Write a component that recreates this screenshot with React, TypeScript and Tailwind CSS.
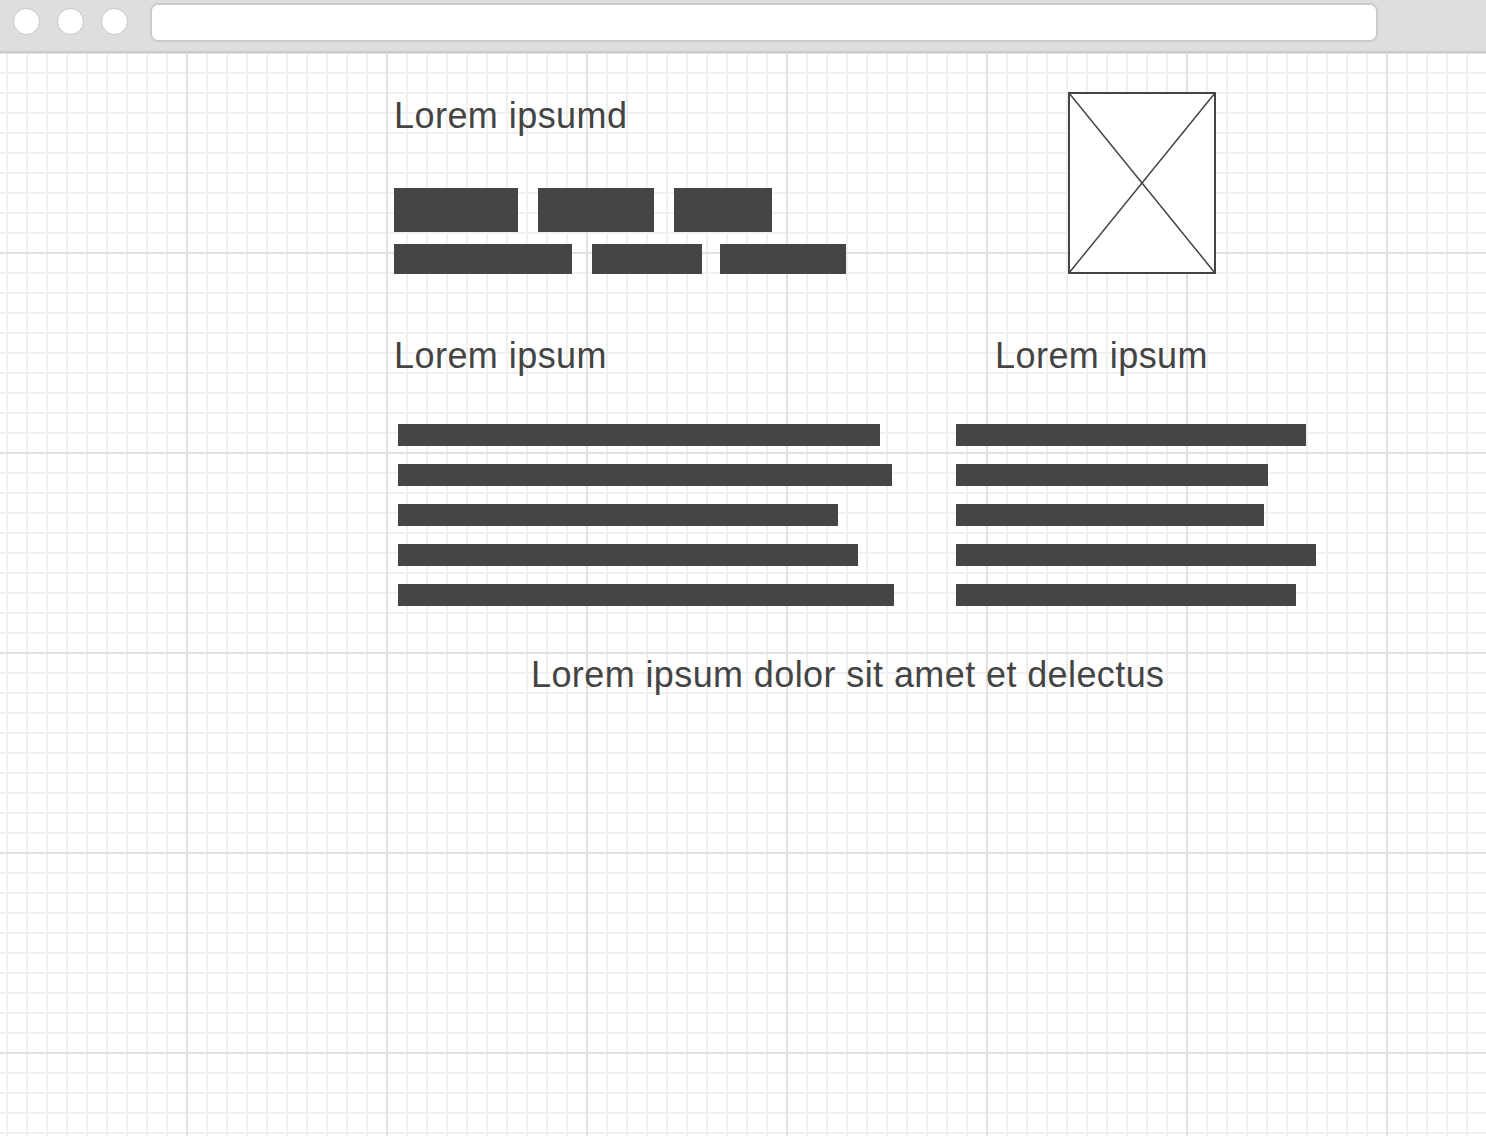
const buttonsTop = [124, 116, 98];
const leftBars = [482, 494, 440, 460, 496];
const rightBars = [350, 312, 308, 360, 340];

function Heading({ children, className = "" }: { children: React.ReactNode; className?: string }) {
  return (
    <h2 className={`text-[36px] leading-[40px] font-normal tracking-[0.45px] text-[#444444] whitespace-nowrap ${className}`}>
      {children}
    </h2>
  );
}

function Bars({ widths }: { widths: number[] }) {
  return (
    <div className="flex flex-col gap-[18px]">
      {widths.map((w, i) => (
        <div key={i} className="h-[22px] bg-[#454545]" style={{ width: w }} />
      ))}
    </div>
  );
}

function ImagePlaceholder() {
  return (
    <svg width="148" height="182" viewBox="0 0 148 182" className="block shrink-0">
      <rect x="1" y="1" width="146" height="180" fill="white" stroke="#444444" strokeWidth="2" />
      <line x1="1" y1="1" x2="147" y2="181" stroke="#444444" strokeWidth="1.5" />
      <line x1="147" y1="1" x2="1" y2="181" stroke="#444444" strokeWidth="1.5" />
    </svg>
  );
}

export default function App() {
  return (
    <div className="min-h-[1136px] w-full bg-white font-['Liberation_Sans',Arial,sans-serif] [background-image:linear-gradient(to_right,#e2e2e2_2px,transparent_2px),linear-gradient(to_bottom,#e2e2e2_2px,transparent_2px),linear-gradient(to_right,#f0f0f0_2px,transparent_2px),linear-gradient(to_bottom,#f0f0f0_2px,transparent_2px)] [background-size:200px_200px,200px_200px,20px_20px,20px_20px] [background-position:186px_52px,186px_52px,6px_12px,6px_12px]">
      {/* browser chrome */}
      <div className="flex h-[53px] items-start border-b-2 border-[#cacaca] bg-[#dedede]">
        <div className="ml-[13px] mt-[8px] flex gap-[17px]">
          <span className="h-[27px] w-[27px] rounded-full border border-[#c6c6c6] bg-white" />
          <span className="h-[27px] w-[27px] rounded-full border border-[#c6c6c6] bg-white" />
          <span className="h-[27px] w-[27px] rounded-full border border-[#c6c6c6] bg-white" />
        </div>
        <div className="ml-[22px] mt-[3px] h-[39px] w-[1228px] rounded-[8px] border-2 border-[#cccccc] bg-white" />
      </div>

      <main className="pl-[394px] pt-[39px]">
        <div className="flex items-start">
          <div className="w-[674px] pt-[4px]">
            <Heading>Lorem ipsumd</Heading>
            <div className="mt-[52px] flex flex-col gap-[12px]">
              <div className="flex gap-[20px]">
                {buttonsTop.map((w, i) => (
                  <div key={i} className="h-[44px] bg-[#454545]" style={{ width: w }} />
                ))}
              </div>
              <div className="flex">
                <div className="h-[30px] w-[178px] bg-[#454545]" />
                <div className="ml-[20px] h-[30px] w-[110px] bg-[#454545]" />
                <div className="ml-[18px] h-[30px] w-[126px] bg-[#454545]" />
              </div>
            </div>
          </div>
          <ImagePlaceholder />
        </div>

        <div className="mt-[62px] flex items-start">
          <div className="w-[562px]">
            <Heading>Lorem ipsum</Heading>
            <div className="mt-[48px] pl-[4px]">
              <Bars widths={leftBars} />
            </div>
          </div>
          <div>
            <Heading className="pl-[39px]">Lorem ipsum</Heading>
            <div className="mt-[48px]">
              <Bars widths={rightBars} />
            </div>
          </div>
        </div>

        <p className="mt-[49px] pl-[137px] text-[36px] leading-[40px] tracking-[0.4px] text-[#444444] whitespace-nowrap">
          Lorem ipsum dolor sit amet et delectus
        </p>
      </main>
    </div>
  );
}
